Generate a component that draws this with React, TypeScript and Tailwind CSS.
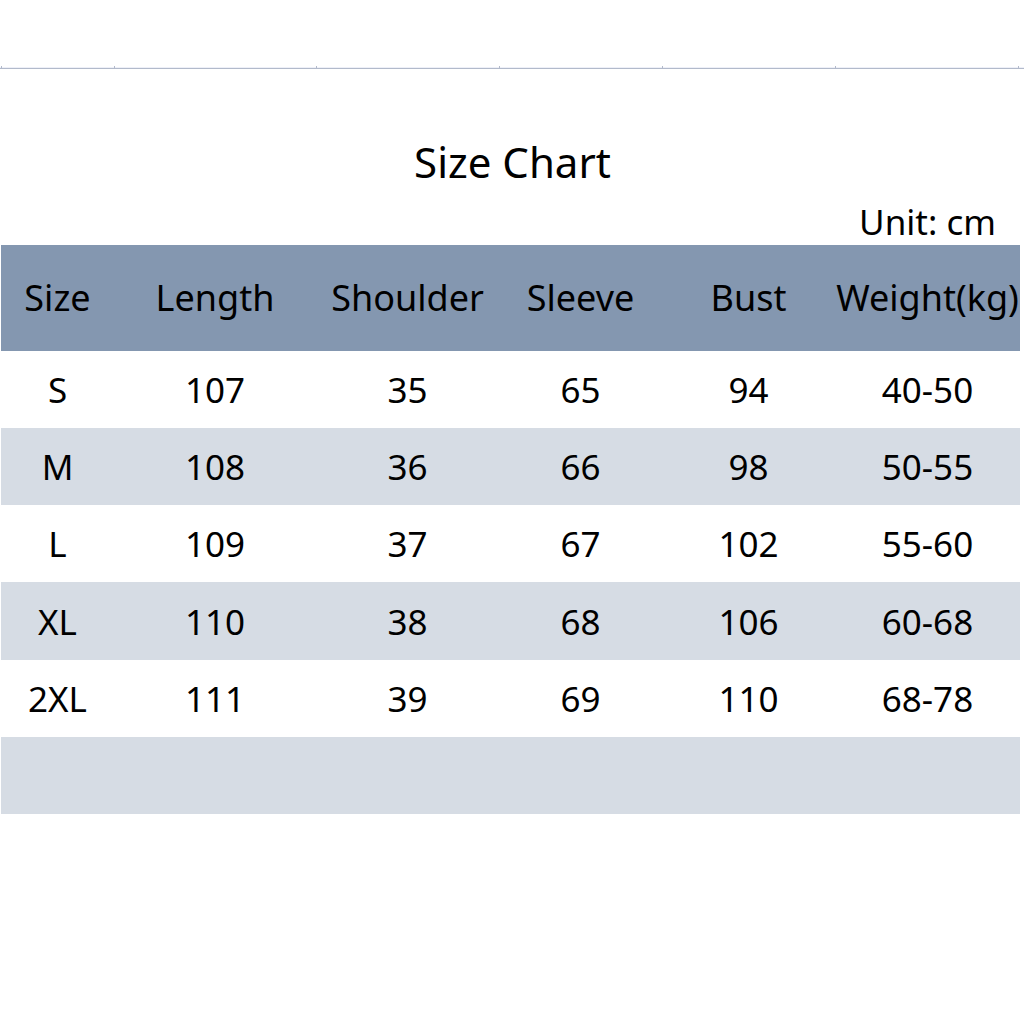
import React from "react";

const cols = ["w-[113px]", "w-[202px]", "w-[183px]", "w-[163px]", "w-[173px]", "w-[185px]"];
const header = ["Size", "Length", "Shoulder", "Sleeve", "Bust", "Weight(kg)"];
const rows = [
  ["S", "107", "35", "65", "94", "40-50"],
  ["M", "108", "36", "66", "98", "50-55"],
  ["L", "109", "37", "67", "102", "55-60"],
  ["XL", "110", "38", "68", "106", "60-68"],
  ["2XL", "111", "39", "69", "110", "68-78"],
  ["", "", "", "", "", ""],
];
const rowH = ["h-[77px]", "h-[77px]", "h-[77px]", "h-[78px]", "h-[77px]", "h-[77px]"];
const ticks = [1, 114, 316, 499, 662, 835, 1018];

export default function App() {
  return (
    <div className="w-[1024px] h-[1024px] bg-white text-black overflow-hidden" style={{ fontFamily: '"Noto Sans", "Open Sans", sans-serif' }}>
      <div className="h-[67px]" />
      <div className="relative h-[2px] border-t border-[#eef0f8] border-b-[1px] border-b-[#b2bacb]">
        {ticks.map((x) => (
          <div key={x} className="absolute top-[-2px] w-px h-[3px] bg-[#b2bacb]" style={{ left: x }} />
        ))}
      </div>
      <div className="mt-[66px] h-[54px] flex items-center justify-center text-[42px] leading-none pl-px">Size Chart</div>
      <div className="h-[56px] pt-[8px] flex items-center justify-end pr-[28px] text-[35px] leading-none">Unit: cm</div>
      <div className="pl-px">
        <div className="flex h-[106px] bg-[#8497b0] w-[1019px]">
          {header.map((h, i) => (
            <div key={i} className={`${cols[i]} flex items-center justify-center text-[36px] leading-none whitespace-nowrap`}>{h}</div>
          ))}
        </div>
        {rows.map((r, ri) => (
          <div key={ri} className={`flex ${rowH[ri]} w-[1019px] ${ri % 2 === 1 ? "bg-[#d6dce4]" : "bg-white"}`}>
            {r.map((c, i) => (
              <div key={i} className={`${cols[i]} flex items-center justify-center text-[35px] leading-none`}>{c}</div>
            ))}
          </div>
        ))}
      </div>
    </div>
  );
}
